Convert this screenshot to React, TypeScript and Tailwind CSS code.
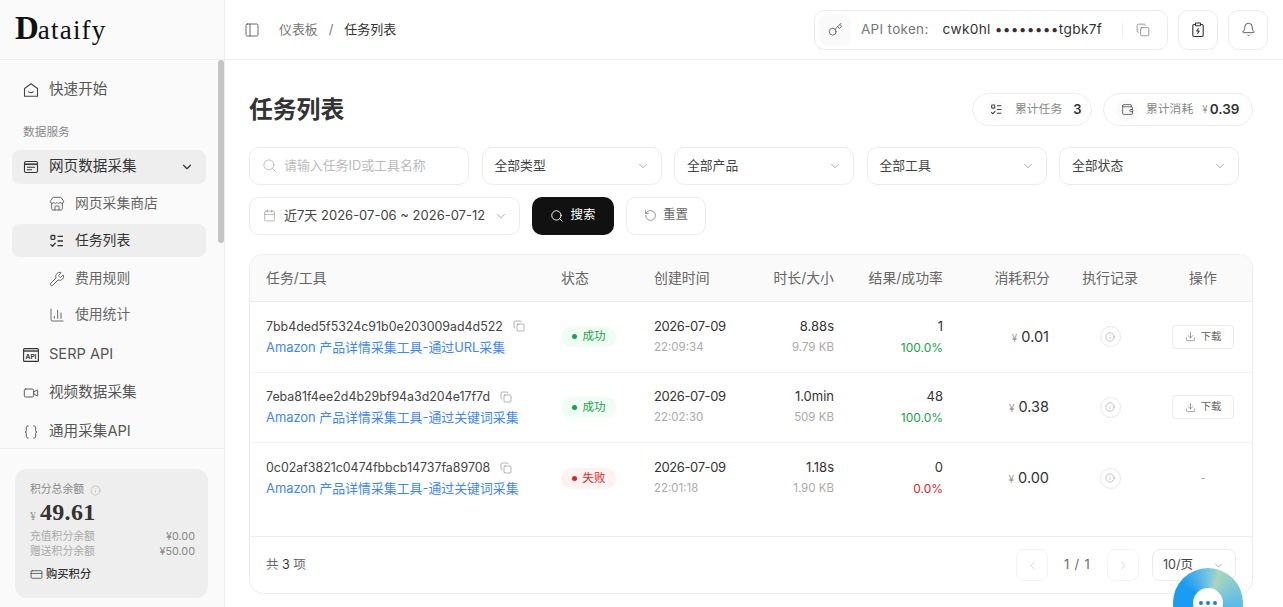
import { Bell, Braces, ChartColumn, ChevronDown, ChevronLeft, ChevronRight, Calendar, Copy, CreditCard, Download, Info, Key, PanelLeft, RotateCcw, Search, Store, Video, Wallet, Wrench } from "lucide-react";

const font = "font-['Inter','Noto_Sans_CJK_SC',sans-serif]";

function HomeIcon() {
  return (
    <svg width="16" height="16" viewBox="0 0 16 16" fill="none" stroke="#444" strokeWidth="1.1">
      <path d="M1.5 6.5 8 1.7l6.500 4.800V14.300H1.500z" strokeLinejoin="round" />
      <path d="M5.800 9.800c1.200 1 3.200 1 4.400 0" strokeLinecap="round" />
    </svg>
  );
}

function WebIcon() {
  return (
    <svg width="16" height="16" viewBox="0 0 16 16" fill="none" stroke="#333" strokeWidth="1.100">
      <rect x="1.500" y="2.500" width="13" height="11" rx="1.500" />
      <path d="M1.500 5.200h13" strokeWidth="1.500" />
      <path d="M4 8.200h8M4 10.800h5" />
    </svg>
  );
}

function ApiIcon() {
  return (
    <svg width="16" height="14" viewBox="0 0 16 14" fill="none">
      <rect x="0.600" y="0.600" width="14.800" height="12.800" rx="1" stroke="#333" strokeWidth="1.100" />
      <path d="M1 3h14" stroke="#333" strokeWidth="1.400" />
      <text x="8" y="11" textAnchor="middle" fontSize="6.500" fontWeight="700" fill="#333" fontFamily="Inter">API</text>
    </svg>
  );
}

function ClipboardBolt() {
  return (
    <svg width="16" height="16" viewBox="0 0 16 16" fill="none" stroke="#333" strokeWidth="1.100">
      <rect x="2.800" y="2.500" width="10.400" height="12" rx="1.200" />
      <rect x="5.500" y="1" width="5" height="2.800" rx="0.600" fill="#fff" />
      <path d="M8.600 6.200 6.700 9h2.600l-1.900 2.800" strokeLinejoin="round" />
    </svg>
  );
}

function TaskListIcon({ size = 16, color = "#333" }: { size?: number; color?: string }) {
  return (
    <svg width={size} height={size} viewBox="0 0 16 16" fill="none" stroke={color} strokeWidth="1.300">
      <rect x="2" y="2.500" width="3.800" height="3.800" rx="0.800" />
      <path d="M8.500 3.300H14M8.500 8H14M8.500 12.700H14" />
      <path d="m1.800 11.600 1.700 1.700 2.700-3" strokeLinecap="round" strokeLinejoin="round" />
    </svg>
  );
}

function ChatBubble() {
  return (
    <div className="absolute left-[1173px] top-[568px] flex h-[70px] w-[70px] items-center justify-center rounded-full bg-[conic-gradient(from_20deg,#a9d5c0,#5bbde6_20%,#1a9cf2_50%,#1a9cf2_80%,#7cc5df_95%,#a9d5c0)]">
      <div className="flex h-[30px] w-[30px] items-center justify-center gap-[2.500px] rounded-full bg-white">
        <span className="h-[4.500px] w-[4.500px] rounded-full bg-[#1a80e8]" />
        <span className="h-[4.500px] w-[4.500px] rounded-full bg-[#1a80e8]" />
        <span className="h-[4.500px] w-[4.500px] rounded-full bg-[#1a80e8]" />
      </div>
    </div>
  );
}

function NavTop({ icon, label, active }: { icon: React.ReactNode; label: string; active?: boolean }) {
  return (
    <div className={`ml-3 mr-[18px] flex h-[34px] items-center rounded-lg px-[11px] ${active ? "bg-[#eeeeee] text-[#333]" : "text-[#555]"}`}>
      <span className="flex w-[26px] shrink-0">{icon}</span>
      <span className="flex-1 text-[14.600px]">{label}</span>
      {active && <ChevronDown size={14} strokeWidth={2} className="mr-[1px] text-[#333]" />}
    </div>
  );
}

function NavSub({ icon, label, active }: { icon: React.ReactNode; label: string; active?: boolean }) {
  return (
    <div className={`ml-3 mr-[18px] flex h-[33px] items-center rounded-lg pl-[37px] ${active ? "bg-[#eeeeee] text-[#333]" : "text-[#666]"}`}>
      <span className="flex w-[26px] shrink-0">{icon}</span>
      <span className="text-[13.800px]">{label}</span>
    </div>
  );
}

function Sidebar() {
  return (
    <aside className="flex h-[607px] w-[225px] shrink-0 flex-col border-r border-[#eeeeee] bg-[#fafafa]">
      <div className="flex h-[60px] shrink-0 items-start border-b border-[#eeeeee] pl-[15px] pt-[12px] font-['Liberation_Serif',serif] text-[#111]">
        <span className="text-[33px] font-bold leading-none">D</span>
        <span className="ml-[-1px] mt-[5px] text-[27px] leading-none tracking-[1.200px]">ataify</span>
      </div>
      <div className="relative h-[389px] shrink-0 overflow-hidden border-b border-[#eeeeee]">
        <div className="absolute right-0 top-0 h-[183px] w-[6px] rounded-full bg-[#c4c4c4]" />
        <div className="pt-[13px]">
          <NavTop icon={<HomeIcon />} label="快速开始" />
          <div className="mb-[10px] mt-[17px] pl-[23px] text-[11.700px] leading-[16px] text-[#888]">数据服务</div>
          <NavTop icon={<WebIcon />} label="网页数据采集" active />
          <div className="mt-[3px]">
            <NavSub icon={<Store size={16} strokeWidth={1.300} className="text-[#555]" />} label="网页采集商店" />
          </div>
          <div className="mt-[4px]">
            <NavSub icon={<TaskListIcon />} label="任务列表" active />
          </div>
          <div className="mt-[5px]">
            <NavSub icon={<Wrench size={16} strokeWidth={1.300} className="text-[#555]" />} label="费用规则" />
          </div>
          <div className="mt-[3px]">
            <NavSub icon={<ChartColumn size={16} strokeWidth={1.300} className="text-[#555]" />} label="使用统计" />
          </div>
          <div className="mt-[7px]"><NavTop icon={<ApiIcon />} label="SERP API" /></div>
          <div className="mt-[4px]"><NavTop icon={<Video size={16} strokeWidth={1.300} className="text-[#444]" />} label="视频数据采集" /></div>
          <div className="mt-[5px]"><NavTop icon={<Braces size={16} strokeWidth={1.300} className="text-[#444]" />} label="通用采集API" /></div>
        </div>
      </div>
      <div className="ml-[15px] mr-[16px] mt-[20px] h-[129px] rounded-xl bg-[#eeeeee] pl-[15px] pr-[13px] pt-[14px]">
        <div className="flex items-center gap-[6px] text-[10.800px] leading-[14px] text-[#888]">
          积分总余额 <Info size={11} strokeWidth={1.200} className="text-[#aaa]" />
        </div>
        <div className="mt-[3px] flex items-baseline gap-[4px] font-['Liberation_Serif',serif] leading-[25px] text-[#333]">
          <span className="text-[12px] text-[#999]">¥</span>
          <span className="text-[24px] font-bold tracking-[0.300px]">49.61</span>
        </div>
        <div className="flex justify-between text-[10.800px] leading-[15px] text-[#aaa]">
          <span>充值积分余额</span><span className="text-[#888]">¥0.00</span>
        </div>
        <div className="flex justify-between text-[10.800px] leading-[15px] text-[#aaa]">
          <span>赠送积分余额</span><span className="text-[#888]">¥50.00</span>
        </div>
        <div className="mt-[8px] flex items-center gap-[3px] text-[11.300px] font-medium leading-[14px] text-[#333]">
          <CreditCard size={13} strokeWidth={1.300} /> 购买积分
        </div>
      </div>
    </aside>
  );
}

function Header() {
  return (
    <header className="flex h-[60px] shrink-0 items-center border-b border-[#eeeeee] pl-[19px] pr-[15px]">
      <PanelLeft size={16} strokeWidth={1.200} className="text-[#444]" />
      <span className="ml-[19px] text-[12.900px] text-[#777]">仪表板</span>
      <span className="mx-[11px] text-[12.900px] text-[#777]">/</span>
      <span className="text-[13px] text-[#333]">任务列表</span>
      <div className="ml-auto flex h-[40px] w-[354px] items-center rounded-[10px] border border-[#ececec] pl-[4px]">
        <span className="flex h-[32px] w-[32px] items-center justify-center rounded-lg bg-[#fafafa]">
          <Key size={15} strokeWidth={1.200} className="text-[#444]" />
        </span>
        <span className="ml-[10px] text-[13.500px] tracking-[0.300px] text-[#777]">API token:</span>
        <span className="ml-[14px] text-[13.700px] tracking-[0.300px] text-[#333]">cwk0hl ••••••••tgbk7f</span>
        <span className="ml-[20px] h-[14px] w-px bg-[#eeeeee]" />
        <Copy size={14} strokeWidth={1.100} className="ml-[13px] text-[#666]" />
      </div>
      <span className="ml-[10px] flex h-[40px] w-[40px] items-center justify-center rounded-[10px] border border-[#ececec]"><ClipboardBolt /></span>
      <span className="ml-[10px] flex h-[40px] w-[40px] items-center justify-center rounded-[10px] border border-[#ececec]"><Bell size={15} strokeWidth={1.200} className="text-[#333]" /></span>
    </header>
  );
}

function Select({ label, className }: { label: string; className: string }) {
  return (
    <div className={`flex h-[38px] items-center justify-between rounded-[10px] border border-[#ececec] pl-[12px] pr-[11px] text-[12.800px] text-[#444] ${className}`}>
      {label}
      <ChevronDown size={14} strokeWidth={1.200} className="text-[#888]" />
    </div>
  );
}

const rows = [
  { id: "7bb4ded5f5324c91b0e203009ad4d522", tool: "Amazon 产品详情采集工具-通过URL采集", ok: true, time: "22:09:34", dur: "8.88s", size: "9.79 KB", n: "1", rate: "100.0%", cost: "0.01", dl: true },
  { id: "7eba81f4ee2d4b29bf94a3d204e17f7d", tool: "Amazon 产品详情采集工具-通过关键词采集", ok: true, time: "22:02:30", dur: "1.0min", size: "509 KB", n: "48", rate: "100.0%", cost: "0.38", dl: true },
  { id: "0c02af3821c0474fbbcb14737fa89708", tool: "Amazon 产品详情采集工具-通过关键词采集", ok: false, time: "22:01:18", dur: "1.18s", size: "1.90 KB", n: "0", rate: "0.0%", cost: "0.00", dl: false },
];

const cols = "grid grid-cols-[295px_93px_118px_94px_109px_107px_88px_98px]";

function Table() {
  return (
    <div className="mt-[19.500px] flex h-[340px] w-[1004px] flex-col overflow-hidden rounded-[14px] border border-[#ececec]">
      <div className={`${cols} h-[47px] shrink-0 items-center border-b border-[#ececec] bg-[#fafafa] text-[13.900px] text-[#666]`}>
        <span className="pl-[16px]">任务/工具</span>
        <span className="pl-[16px]">状态</span>
        <span className="pl-[16px]">创建时间</span>
        <span className="pr-[16px] text-right">时长/大小</span>
        <span className="pr-[16px] text-right">结果/成功率</span>
        <span className="pr-[16px] text-right">消耗积分</span>
        <span className="text-center">执行记录</span>
        <span className="text-center">操作</span>
      </div>
      {rows.map((r, i) => (
        <div key={r.id} className={`${cols} h-[70.500px] shrink-0 items-center ${i < 2 ? "border-b border-[#f3f3f3]" : ""}`}>
          <div className="pl-[16px]">
            <div className="flex items-center gap-[10px] text-[12.400px] leading-[21px] text-[#444]">
              {r.id}
              <Copy size={12} strokeWidth={1.100} className="text-[#777]" />
            </div>
            <div className="text-[12.900px] leading-[21px] text-[#3f86f6]">{r.tool}</div>
          </div>
          <div className="flex pl-[16px]">
            <span className={`flex h-[21px] w-[55px] items-center justify-center gap-[6px] rounded-full text-[11.500px] ${r.ok ? "bg-[#f0fdf4] text-[#22a04b]" : "bg-[#fef2f2] text-[#dc2626]"}`}>
              <span className={`h-[5px] w-[5px] rounded-full ${r.ok ? "bg-[#16a34a]" : "bg-[#dc2626]"}`} />
              {r.ok ? "成功" : "失败"}
            </span>
          </div>
          <div className="pl-[16px]">
            <div className="text-[13px] leading-[21px] tracking-[-0.400px] text-[#333]">2026-07-09</div>
            <div className="text-[11.500px] leading-[21px] text-[#aaa]">{r.time}</div>
          </div>
          <div className="pr-[16px] text-right">
            <div className="text-[13px] leading-[21px] text-[#333]">{r.dur}</div>
            <div className="text-[11.500px] leading-[21px] text-[#aaa]">{r.size}</div>
          </div>
          <div className="pr-[16px] text-right">
            <div className="text-[13px] leading-[21px] text-[#333]">{r.n}</div>
            <div className={`text-[12px] leading-[21px] ${r.ok ? "text-[#22a04b]" : "text-[#dc2626]"}`}>{r.rate}</div>
          </div>
          <div className="flex items-baseline justify-end gap-[4px] pr-[17px]">
            <span className="text-[10px] text-[#999]">¥</span>
            <span className="text-[14.500px] text-[#333]">{r.cost}</span>
          </div>
          <div className="flex justify-center">
            <span className="flex h-[21px] w-[21px] items-center justify-center rounded-full border border-[#e8e8e8]">
              <Info size={10} strokeWidth={1.200} className="text-[#888]" />
            </span>
          </div>
          <div className="flex justify-center">
            {r.dl ? (
              <span className="flex h-[24px] w-[62px] items-center justify-center gap-[5px] rounded-[4px] border border-[#ececec] text-[10.500px] text-[#666]">
                <Download size={11} strokeWidth={1.300} /> 下载
              </span>
            ) : (
              <span className="text-[11px] text-[#aaa]">-</span>
            )}
          </div>
        </div>
      ))}
      <div className="mt-auto flex h-[57px] shrink-0 items-center border-t border-[#ececec] pl-[16px] pr-[16px]">
        <span className="text-[12.500px] text-[#666]">共 <span className="text-[#333]">3</span> 项</span>
        <span className="ml-auto flex h-[32px] w-[32px] items-center justify-center rounded-lg border border-[#f3f3f3] text-[#bbb]"><ChevronLeft size={13} strokeWidth={1.200} /></span>
        <span className="mx-[16px] w-[27px] text-[12.800px] tracking-[0.900px] whitespace-nowrap text-[#666]">1 / 1</span>
        <span className="flex h-[32px] w-[32px] items-center justify-center rounded-lg border border-[#f3f3f3] text-[#bbb]"><ChevronRight size={13} strokeWidth={1.200} /></span>
        <span className="ml-[13px] flex h-[32px] w-[84px] items-center justify-between rounded-lg border border-[#ececec] pl-[10px] pr-[10px] text-[12.500px] text-[#444]">
          10/页 <ChevronDown size={13} strokeWidth={1.200} className="text-[#888]" />
        </span>
      </div>
    </div>
  );
}

export default function App() {
  return (
    <div className={`${font} relative flex h-[607px] w-[1283px] overflow-hidden bg-white`}>
      <Sidebar />
      <main className="flex min-w-0 flex-1 flex-col">
        <Header />
        <div className="pl-[24px]">
          <div className="mt-[33px] flex h-[33px] items-center">
            <h1 className="text-[23.800px] font-semibold text-[#333]">任务列表</h1>
            <div className="ml-auto mr-[30px] flex gap-[11px]">
              <div className="flex h-[33px] w-[120px] items-center rounded-full border border-[#ececec] pl-[12px]">
                <span className="flex h-[22px] w-[22px] items-center justify-center rounded-full bg-[#fafafa]"><TaskListIcon size={13} color="#444" /></span>
                <span className="ml-[8px] text-[11.800px] text-[#888]">累计任务</span>
                <span className="ml-[11px] text-[13px] font-semibold text-[#333]">3</span>
              </div>
              <div className="flex h-[33px] w-[150px] items-center rounded-full border border-[#ececec] pl-[12px]">
                <span className="flex h-[22px] w-[22px] items-center justify-center rounded-full bg-[#fafafa]"><Wallet size={13} strokeWidth={1.300} className="text-[#333]" /></span>
                <span className="ml-[8px] text-[11.800px] text-[#888]">累计消耗</span>
                <span className="ml-[9px] text-[10px] text-[#999]">¥</span>
                <span className="ml-[2px] text-[13.500px] font-semibold text-[#333]">0.39</span>
              </div>
            </div>
          </div>
          <div className="mt-[20.500px] flex gap-[12.500px]">
            <div className="flex h-[38px] w-[220px] items-center rounded-[10px] border border-[#ececec] pl-[12px]">
              <Search size={15} strokeWidth={1.200} className="text-[#aaa]" />
              <span className="ml-[7px] text-[12.900px] text-[#bbb]">请输入任务ID或工具名称</span>
            </div>
            <Select label="全部类型" className="w-[180px]" />
            <Select label="全部产品" className="w-[180px]" />
            <Select label="全部工具" className="w-[180px]" />
            <Select label="全部状态" className="w-[180px]" />
          </div>
          <div className="mt-[12px] flex gap-[12px]">
            <div className="flex h-[38px] w-[271px] items-center rounded-[10px] border border-[#ececec] pl-[13px]">
              <Calendar size={13} strokeWidth={1.100} className="text-[#888]" />
              <span className="ml-[8px] text-[13px] text-[#444]">近7天 2026-07-06 ~ 2026-07-12</span>
              <ChevronDown size={14} strokeWidth={1.200} className="ml-[9px] text-[#888]" />
            </div>
            <div className="flex h-[38px] w-[82px] items-center justify-center gap-[6px] rounded-[10px] bg-[#111] text-[12.500px] text-white">
              <Search size={14} strokeWidth={1.600} /> 搜索
            </div>
            <div className="flex h-[38px] w-[80px] items-center justify-center gap-[6px] rounded-[10px] border border-[#ececec] text-[12.500px] text-[#666]">
              <RotateCcw size={13} strokeWidth={1.300} /> 重置
            </div>
          </div>
          <Table />
        </div>
      </main>
      <ChatBubble />
    </div>
  );
}
